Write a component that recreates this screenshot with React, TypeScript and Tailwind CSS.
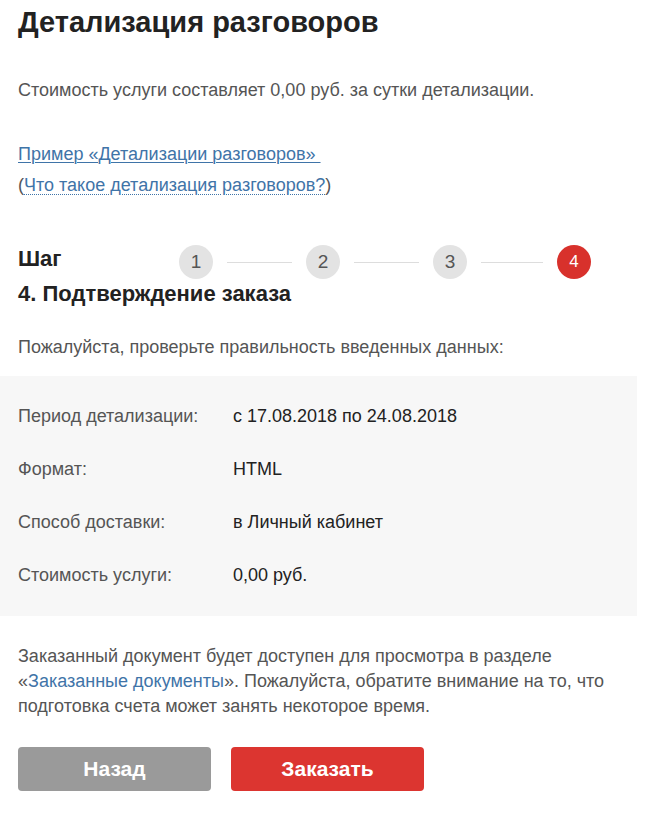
import React from 'react';

const steps = [1, 2, 3, 4];

const rows = [
  { label: 'Период детализации:', value: 'с 17.08.2018 по 24.08.2018' },
  { label: 'Формат:', value: 'HTML' },
  { label: 'Способ доставки:', value: 'в Личный кабинет' },
  { label: 'Стоимость услуги:', value: '0,00 руб.' },
];

const App = () => {
  return (
    <div className="w-[670px] h-[819px] bg-white overflow-hidden font-['Liberation_Sans',Arial,sans-serif] text-[#555]">
      <div className="px-[18px] pt-[4px]">
        <h1 className="text-[29px] leading-[36px] font-bold text-[#222]">
          Детализация разговоров
        </h1>
        <p className="mt-[37px] text-[18px] leading-[26px]">
          Стоимость услуги составляет 0,00 руб. за сутки детализации.
        </p>
        <div className="mt-[36px] text-[18px] leading-[31px]">
          <div>
            <a href="#" className="text-[#3f74a8] underline decoration-1 underline-offset-2">
              Пример «Детализации разговоров»&nbsp;
            </a>
          </div>
          <div>
            (
            <a href="#" className="text-[#3f74a8] underline decoration-dotted decoration-1 underline-offset-[3px]">
              Что такое детализация разговоров?
            </a>
            )
          </div>
        </div>

        {/* Steps */}
        <div className="mt-[44px] flex items-center">
          <div className="w-[161px] leading-[26px] pb-[6px] text-[22px] font-bold text-[#222]">Шаг</div>
          <div className="flex items-center">
            {steps.map((n, i) => (
              <React.Fragment key={n}>
                <div
                  className={
                    n === 4
                      ? 'w-[34px] h-[34px] rounded-full bg-[#d8312c] text-white flex items-center justify-center text-[17px]'
                      : 'w-[34px] h-[34px] rounded-full bg-[#e3e3e3] text-[#555] flex items-center justify-center text-[19px]'
                  }
                >
                  {n}
                </div>
                {i < steps.length - 1 && (
                  <div
                    className={
                      i === 2
                        ? 'mx-[14px] w-[62px] h-px bg-[#ddd]'
                        : 'mx-[14px] w-[65px] h-px bg-[#ddd]'
                    }
                  />
                )}
              </React.Fragment>
            ))}
          </div>
        </div>
        <div className="mt-[2px] text-[22px] leading-[26px] font-bold text-[#222]">
          4. Подтверждение заказа
        </div>
        <p className="mt-[27px] text-[18px] leading-[26px]">
          Пожалуйста, проверьте правильность введенных данных:
        </p>
      </div>

      {/* Summary panel */}
      <div className="mt-[16px] w-[637px] bg-[#f7f7f7] px-[18px] pt-[27px] pb-[28px] flex flex-col gap-[27px]">
        {rows.map((r) => (
          <div key={r.label} className="flex text-[18px] leading-[26px]">
            <div className="w-[215px]">{r.label}</div>
            <div className="text-[#222]">{r.value}</div>
          </div>
        ))}
      </div>

      <div className="px-[18px]">
        <p className="mt-[28px] text-[18px] leading-[25px] w-[620px]">
          Заказанный документ будет доступен для просмотра в разделе «
          <a href="#" className="text-[#3f74a8]">Заказанные документы</a>». Пожалуйста, обратите
          внимание на то, что подготовка счета может занять некоторое время.
        </p>
        <div className="mt-[28px] flex gap-[20px]">
          <button className="w-[193px] h-[44px] rounded-[4px] bg-[#9a9a9a] text-white text-[21px] font-bold">
            Назад
          </button>
          <button className="w-[193px] h-[44px] rounded-[4px] bg-[#dc3530] text-white text-[21px] font-bold">
            Заказать
          </button>
        </div>
      </div>
    </div>
  );
};

export default App;
